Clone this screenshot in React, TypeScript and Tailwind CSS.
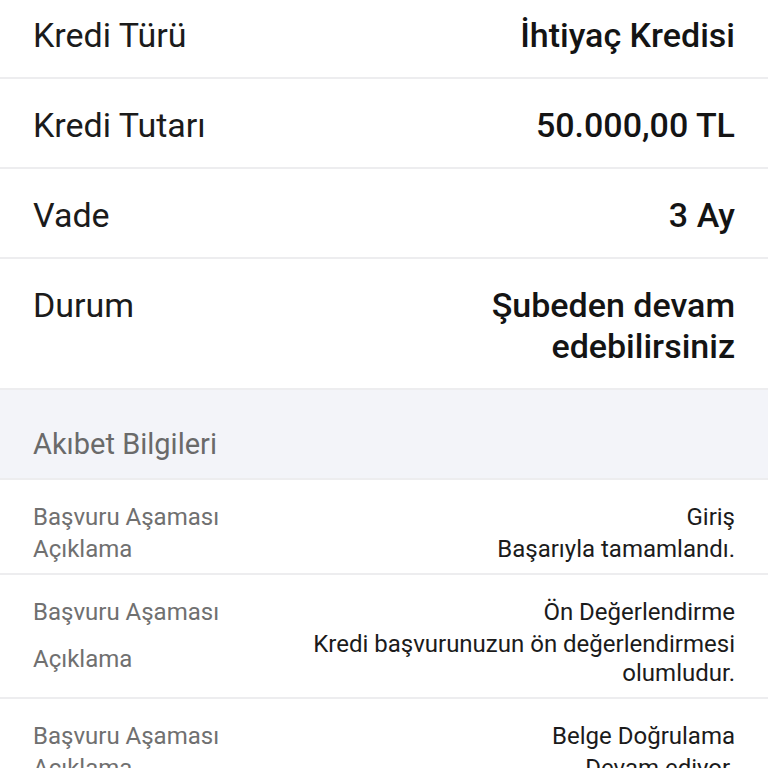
import React from 'react';

const summary = [
  { label: 'Kredi Türü', value: 'İhtiyaç Kredisi' },
  { label: 'Kredi Tutarı', value: '50.000,00 TL' },
  { label: 'Vade', value: '3 Ay' },
  { label: 'Durum', value: 'Şubeden devam edebilirsiniz' },
];

const steps = [
  { stage: 'Giriş', note: 'Başarıyla tamamlandı.' },
  { stage: 'Ön Değerlendirme', note: 'Kredi başvurunuzun ön değerlendirmesi olumludur.' },
  { stage: 'Belge Doğrulama', note: 'Devam ediyor.' },
];

export default function App() {
  return (
    <div className="min-h-screen bg-white font-['Roboto',sans-serif] antialiased">
      {/* Credit summary */}
      <div>
        {summary.map((row, i) => (
          <div
            key={row.label}
            className={`grid grid-cols-2 gap-6 border-b-2 border-[#ededef] px-[33px] pb-[21px] ${i === 0 ? 'pt-[15px]' : 'pt-[26px]'}`}
          >
            <span className="text-[34px] leading-[41px] text-[#1b1b1b]">{row.label}</span>
            <span className="text-right text-[34px] font-medium leading-[41px] text-[#141414]">{row.value}</span>
          </div>
        ))}
      </div>

      {/* Section header */}
      <div className="border-b-2 border-[#ededef] bg-[#f3f4f9] px-[33px] pb-[16px] pt-[36px]">
        <h2 className="text-[29px] leading-[36px] text-[#6a6a6a]">Akıbet Bilgileri</h2>
      </div>

      {/* Application steps */}
      <div>
        {steps.map((s) => (
          <div
            key={s.stage}
            className="grid grid-cols-[auto_1fr] items-center gap-x-6 gap-y-[3px] border-b-2 border-[#ededef] px-[33px] pb-[9px] pt-[23px] text-[24px] leading-[29px]"
          >
            <span className="text-[#707070]">Başvuru Aşaması</span>
            <span className="text-right text-[#1b1b1b]">{s.stage}</span>
            <span className="text-[#707070]">Açıklama</span>
            <span className="text-right text-[#1b1b1b]">{s.note}</span>
          </div>
        ))}
      </div>
    </div>
  );
}
